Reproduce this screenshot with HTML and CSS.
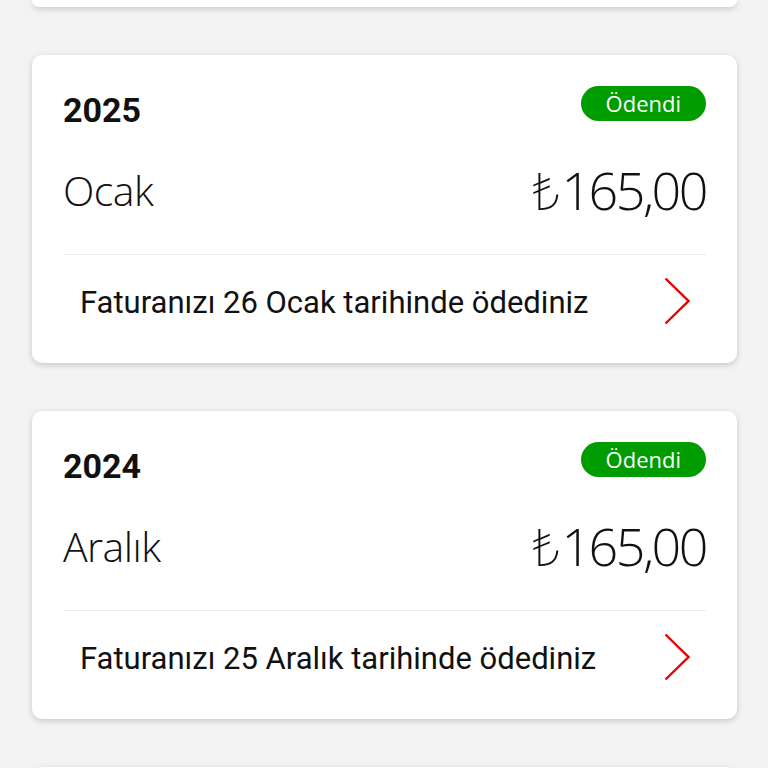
FILE: index.html
```html
<!DOCTYPE html>
<html lang="tr">
<head>
<meta charset="UTF-8" />
<meta name="viewport" content="width=device-width, initial-scale=1" />
<title>Faturalarım</title>
<link rel="stylesheet" href="styles.css">
</head>
<body>

<div class="liste">
  <div class="kart kart-kuyruk"></div>

  <div class="kart">
    <div class="kart-ust">
      <span class="yil">2025</span>
      <span class="rozet">Ödendi</span>
    </div>
    <div class="kart-orta">
      <span class="ay">Ocak</span>
      <span class="tutar"><span class="tl">₺</span>165,00</span>
    </div>
    <div class="kart-alt">
      <span class="aciklama">Faturanızı 26 Ocak tarihinde ödediniz</span>
      <svg class="ok" width="26" height="48" viewBox="0 0 26 48">
        <polyline points="1.5,1.5 24.5,24 1.5,46.5" fill="none" stroke="#e60000" stroke-width="2.4" />
      </svg>
    </div>
  </div>

  <div class="kart">
    <div class="kart-ust">
      <span class="yil">2024</span>
      <span class="rozet">Ödendi</span>
    </div>
    <div class="kart-orta">
      <span class="ay">Aralık</span>
      <span class="tutar"><span class="tl">₺</span>165,00</span>
    </div>
    <div class="kart-alt">
      <span class="aciklama">Faturanızı 25 Aralık tarihinde ödediniz</span>
      <svg class="ok" width="26" height="48" viewBox="0 0 26 48">
        <polyline points="1.5,1.5 24.5,24 1.5,46.5" fill="none" stroke="#e60000" stroke-width="2.4" />
      </svg>
    </div>
  </div>

  <div class="kart kart-bas"></div>
</div>

</body>
</html>
```

FILE: styles.css
```css
body {
  margin: 0;
  background: #f3f3f3;
  font-family: Roboto, Arial, sans-serif;
  color: #111;
  height: 768px;
  overflow: hidden;
}
.liste {
  display: flex;
  flex-direction: column;
  gap: 48px;
  padding: 0 31px 0 32px;
}
.kart {
  background: #fff;
  border-radius: 10px;
  box-shadow: 0 2px 6px rgba(0, 0, 0, 0.18);
  padding: 31px 31px 0 31px;
}
.kart-kuyruk {
  height: 7px;
  padding: 0;
  border-radius: 0 0 10px 10px;
}
.kart-bas {
  height: 40px;
  padding: 0;
}
.kart-ust {
  display: flex;
  justify-content: space-between;
  align-items: flex-start;
}
.yil {
  margin-top: 7px;
  font-size: 34px;
  line-height: 34px;
  font-weight: 700;
  color: #111;
}
.rozet {
  background: #009c00;
  color: #fff;
  font-family: "Open Sans", sans-serif;
  font-size: 22px;
  line-height: 35px;
  height: 35px;
  padding: 0 25px;
  border-radius: 18px;
}
.kart-orta {
  display: flex;
  justify-content: space-between;
  align-items: center;
  margin: 37px 0 38px 0;
  height: 52px;
  font-family: "Open Sans", sans-serif;
  font-weight: 300;
  color: #111;
}
.ay {
  font-size: 41px;
  line-height: 52px;
  letter-spacing: -0.5px;
}
.tutar {
  font-size: 52px;
  line-height: 52px;
  letter-spacing: -2.5px;
}
.tl {
  font-family: "Noto Sans", "DejaVu Sans", sans-serif;
  font-weight: 200;
  letter-spacing: 0;
}
.kart-alt {
  display: flex;
  justify-content: space-between;
  align-items: center;
  border-top: 1px solid #ebebeb;
  padding: 22px 16px 38px 17px;
}
.aciklama {
  font-size: 31px;
  line-height: 30px;
  position: relative;
  top: 2px;
}
.ok {
  display: block;
}
```
